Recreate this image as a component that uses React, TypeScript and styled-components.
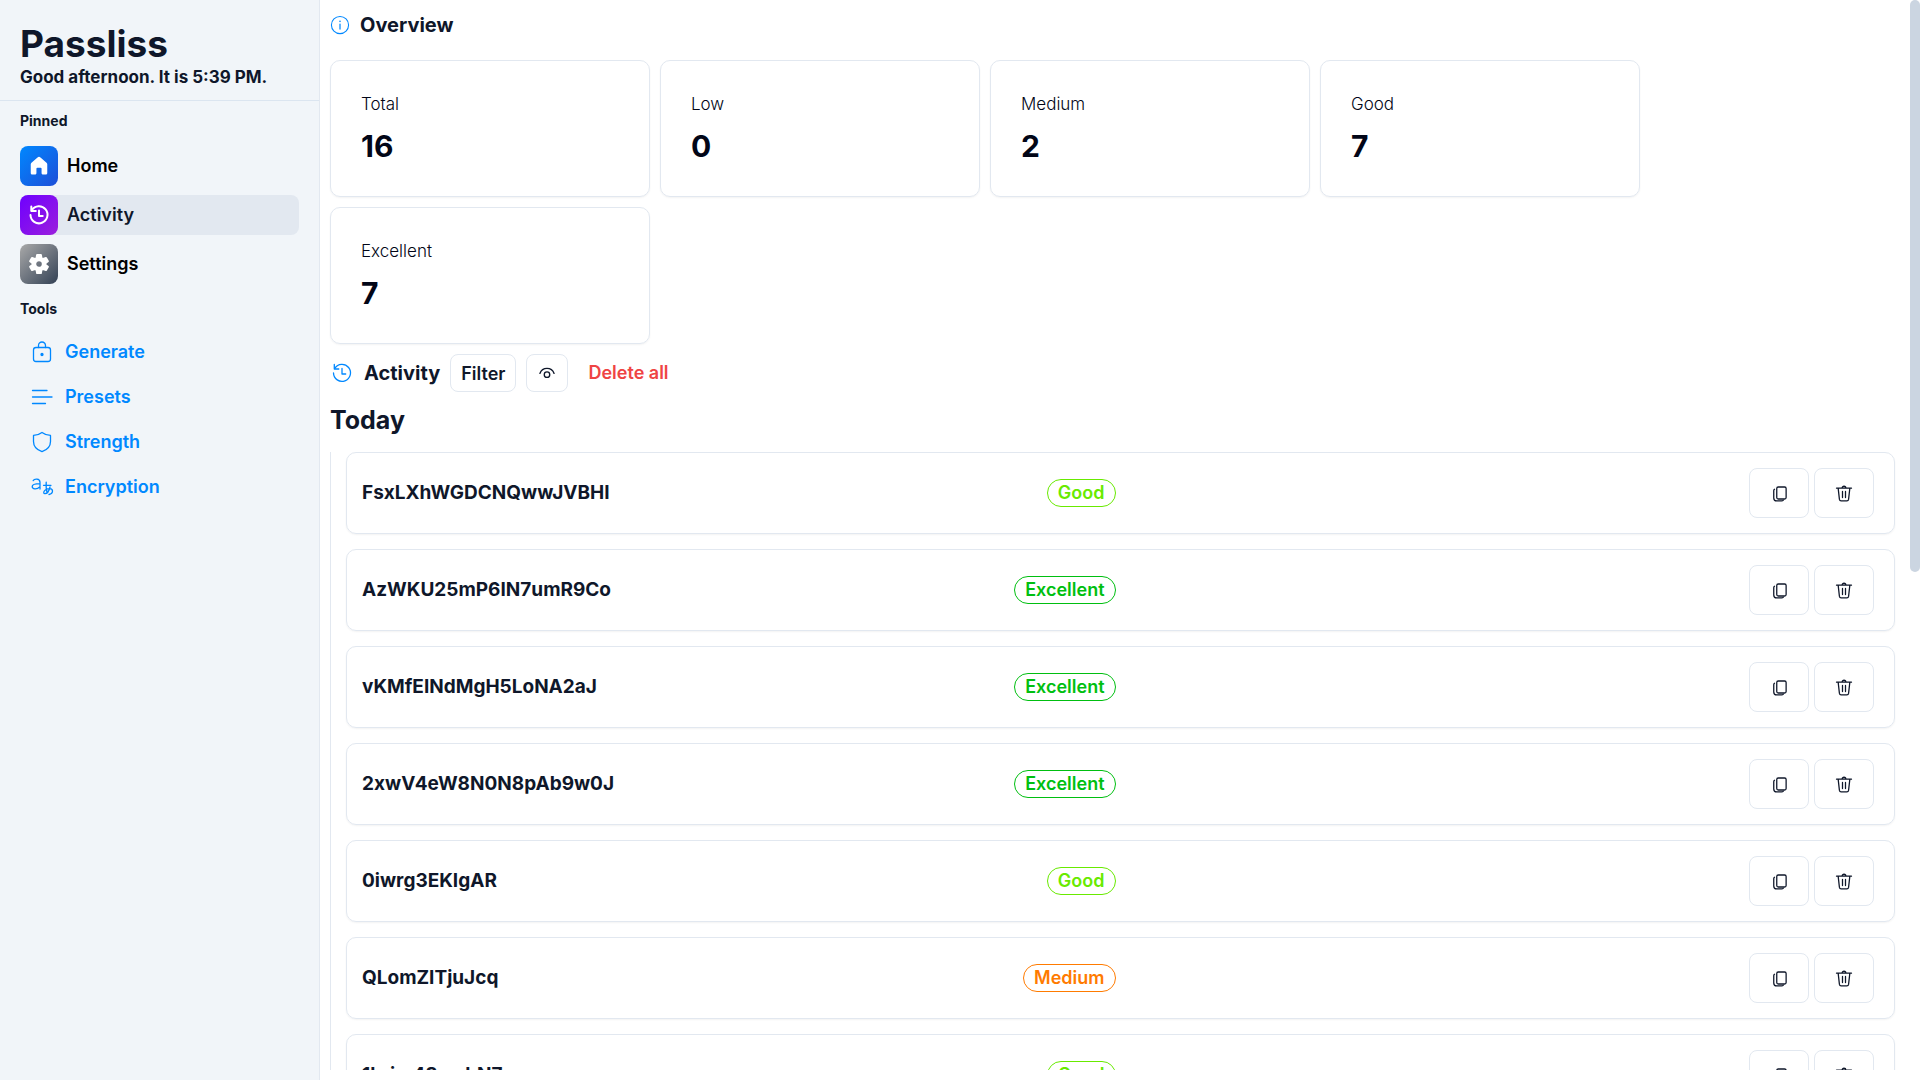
import React from "react";
import styled, { createGlobalStyle } from "styled-components";

const GlobalStyle = createGlobalStyle`
  *, *::before, *::after { box-sizing: border-box; }
  body { margin: 0; background: #fff; color: #0f172a; font-family: Inter, "Liberation Sans", sans-serif; font-size: 18px; line-height: 24px; }
  h1, h2, h3, p, ul, dl, dd { margin: 0; padding: 0; }
  ul { list-style: none; }
  button { font-family: inherit; color: inherit; background: #fff; cursor: pointer; padding: 0; }
  a { text-decoration: none; }
  svg { display: block; flex: none; }
`;

const Page = styled.div`
  display: flex;
  height: 100vh;
`;

const Sidebar = styled.aside`
  flex: 0 0 320px;
  background: #f1f5f9;
  border-right: 1px solid #e2e8f0;
`;

const Brand = styled.header`
  padding: 24px 20px 9px;
  border-bottom: 1px solid #dbe5f0;
`;

const BrandName = styled.h1`
  font-size: 37px;
  line-height: 40px;
  font-weight: 700;
`;

const Greeting = styled.p`
  font-size: 17px;
  line-height: 27px;
  font-weight: 700;
`;

const NavSection = styled.nav`
  padding: 0 20px;
`;

const NavTitle = styled.h2`
  font-size: 14px;
  line-height: 20px;
  font-weight: 700;
  padding-top: 10px;
`;

const PinnedList = styled.ul`
  display: grid;
  gap: 9px;
  margin: 15px 0 5px;
`;

const PinnedLink = styled.a<{ $active?: boolean }>`
  display: flex;
  align-items: center;
  gap: 9px;
  border-radius: 8px;
  font-weight: 600;
  color: ${(p) => (p.$active ? "#0f172a" : "#000")};
  background: ${(p) => (p.$active ? "#e2e8f0" : "transparent")};
`;

const Tile = styled.span<{ $from: string; $to: string }>`
  display: grid;
  place-items: center;
  width: 38px;
  height: 40px;
  border-radius: 8px;
  color: #fff;
  background: linear-gradient(to bottom right, ${(p) => p.$from}, ${(p) => p.$to});
`;

const ToolList = styled.ul`
  display: grid;
  gap: 5px;
  padding: 13px 10px;
`;

const ToolLink = styled.a`
  display: flex;
  align-items: center;
  gap: 11px;
  height: 40px;
  font-weight: 600;
  color: #0088ff;
`;

const Main = styled.main`
  flex: 1;
  min-width: 0;
  margin-bottom: 10px;
  overflow-y: auto;
  scrollbar-width: none;
`;

const ScrollRail = styled.div`
  flex: 0 0 10px;
`;

const ScrollThumb = styled.div`
  height: 53%;
  border-radius: 5px;
  background: #cbd5e1;
`;

const Content = styled.div`
  padding: 10px 15px 10px 10px;
`;

const Row = styled.div`
  display: flex;
  align-items: center;
  gap: 10px;
`;

const SectionTitle = styled.h2`
  font-size: 20px;
  line-height: 30px;
  font-weight: 700;
`;

const Accent = styled.span`
  color: #0088ff;
`;

const Stats = styled.dl`
  display: flex;
  flex-wrap: wrap;
  gap: 10px;
  margin: 20px 0 10px;
`;

const Stat = styled.div`
  width: 320px;
  padding: 29px 30px;
  border: 1px solid #e2e8f0;
  border-radius: 10px;
  box-shadow: 0 1px 2px rgba(0, 0, 0, 0.05);
  color: #020617;
`;

const StatLabel = styled.dt`
  font-size: 17px;
  line-height: 28px;
  font-weight: 300;
`;

const StatValue = styled.dd`
  font-size: 30px;
  line-height: 36px;
  font-weight: 700;
  padding: 10px 0 3px;
`;

const SmallButton = styled.button`
  display: grid;
  place-items: center;
  height: 38px;
  padding: 0 10px;
  border: 1px solid #e2e8f0;
  border-radius: 8px;
  font-size: 18px;
  font-weight: 600;
`;

const DangerButton = styled.button`
  border: 0;
  padding: 0 10px;
  font-size: 18px;
  line-height: 24px;
  font-weight: 600;
  color: #ef4444;
`;

const DayTitle = styled.h3`
  font-size: 25px;
  line-height: 36px;
  font-weight: 700;
  margin: 10px 0 14px;
`;

const Entries = styled.ul`
  display: grid;
  gap: 15px;
  padding-left: 15px;
  border-left: 1px solid #e2e8f0;
`;

const Entry = styled.li`
  display: grid;
  grid-template-columns: 1fr 1fr;
  align-items: center;
  padding: 15px;
  border: 1px solid #e2e8f0;
  border-radius: 10px;
  box-shadow: 0 1px 2px rgba(0, 0, 0, 0.05);
`;

const EntryInfo = styled.div`
  display: flex;
  align-items: center;
  justify-content: space-between;
  padding-right: 5px;
`;

const Password = styled.p`
  font-size: 19px;
  line-height: 28px;
  font-weight: 700;
`;

const Badge = styled.span<{ $color: string }>`
  padding: 0 10px;
  border: 1px solid ${(p) => p.$color};
  border-radius: 14px;
  font-size: 18px;
  line-height: 26px;
  font-weight: 600;
  color: ${(p) => p.$color};
`;

const Actions = styled.div`
  display: flex;
  justify-content: flex-end;
  gap: 5px;
  padding-right: 5px;
`;

const ActionButton = styled.button`
  display: grid;
  place-items: center;
  width: 60px;
  height: 50px;
  border: 1px solid #e2e8f0;
  border-radius: 8px;
`;

type IconProps = { size?: number; weight?: number };

const Icon = ({ size = 24, weight = 1.3, children }: IconProps & { children: React.ReactNode }) => (
  <svg width={size} height={size} viewBox="0 0 24 24" fill="none" stroke="currentColor" strokeWidth={weight} strokeLinecap="round" strokeLinejoin="round" aria-hidden="true">
    {children}
  </svg>
);

const HomeIcon = () => (
  <Icon size={22}>
    <path fill="currentColor" stroke="none" d="M10.4 2.6a2.4 2.4 0 0 1 3.2 0l6.6 5.8c.5.5.8 1.1.8 1.8v9.3c0 1-.8 1.8-1.8 1.8h-2.6c-1 0-1.8-.8-1.8-1.8v-4.7c0-.6-.4-1-1-1h-3.6c-.6 0-1 .4-1 1v4.7c0 1-.8 1.8-1.8 1.8H4.8c-1 0-1.8-.8-1.8-1.8v-9.3c0-.7.3-1.3.8-1.8z" />
  </Icon>
);

const HistoryIcon = ({ size, weight }: IconProps) => (
  <Icon size={size} weight={weight}>
    <path d="M4.8 7.3A8.500 8.500 0 1 1 3.500 12" />
    <path d="M4.300 3.500v4.500h4.500" />
    <path d="M12 7.500v5.500h3.700" />
  </Icon>
);

const GearIcon = () => (
  <Icon size={24}>
    <path fill="currentColor" stroke="currentColor" strokeWidth={2} fillRule="evenodd" d="M10.1 3h3.8l.5 3 1.8 1 2.8-1.1 1.9 3.3-2.3 1.8v2l2.3 1.8-1.9 3.3-2.8-1.1-1.8 1-.5 3h-3.8l-.5-3-1.8-1L5 18.1l-1.9-3.3L5.4 13v-2L3.1 9.2 5 5.9 7.8 7l1.8-1zM12 8.2a3.8 3.8 0 1 0 0 7.6 3.8 3.8 0 0 0 0-7.6z" />
  </Icon>
);

const LockIcon = () => (
  <Icon>
    <rect x="3.5" y="7.5" width="17" height="14" rx="2.5" />
    <path d="M8.500 7.500V5.500a3.500 3.500 0 0 1 7 0v2" />
    <circle cx="12" cy="14.5" r="1" fill="currentColor" />
  </Icon>
);

const LinesIcon = () => (
  <Icon>
    <path d="M2.5 5.5h14.500M2.500 12h19.500M2.500 18.500h13" />
  </Icon>
);

const ShieldIcon = () => (
  <Icon>
    <path d="M12 2.400c2.500 1.900 5.300 2.800 8.500 3v6.100c0 4.800-2.800 8.200-8.500 10.200-5.700-2-8.500-5.400-8.500-10.200V5.400c3.200-.2 6-1.100 8.500-3z" />
  </Icon>
);

const TranslateIcon = () => (
  <Icon>
    <path d="M3.200 5.600C4.200 3.800 10 3 10 7.500V14M10 8.600C5.500 8.600 2.200 9 2.200 11.600s4.500 3.600 7.800 0" />
    <path d="M13.500 10.300h7.500M16.200 7.200c-.3 4.800 0 7.800 1 10.500M20 12c-.7 3-2.700 6.700-5 6.700-1.600 0-1.900-2 .3-3.700 2.600-2 7.200-1.900 7.200 1.100 0 1.900-1.500 3.100-3.500 3.400" />
  </Icon>
);

const InfoIcon = () => (
  <Icon size={20}>
    <circle cx="12" cy="12" r="10.3" />
    <path d="M12 10.800v6" strokeWidth={1.5} />
    <circle cx="12" cy="7.6" r="1" fill="currentColor" stroke="none" />
  </Icon>
);

const EyeIcon = () => (
  <Icon size={20} weight={1.6}>
    <path d="M3.500 12.500C5 8.500 8 6.500 12 6.500s7 2 8.500 6" />
    <circle cx="12" cy="14" r="3.3" />
  </Icon>
);

const CopyIcon = () => (
  <Icon size={18} weight={1.7}>
    <rect x="9" y="4" width="12.5" height="16" rx="2" />
    <path d="M6 7c-.7.500-1 1.200-1 2v9.500c0 2.500 1.500 4 4 4h6.500c1 0 1.800-.4 2.300-1" />
  </Icon>
);

const TrashIcon = () => (
  <Icon size={18} weight={1.7}>
    <path d="M2 5.500h20M9.500 5.500a2.500 2.500 0 0 1 5 0M4.200 5.500l1.700 15c.2 1.200 1 2 2.200 2h7.800c1.200 0 2-.8 2.200-2l1.700-15M10 10v8M14 10v8" />
  </Icon>
);

const pinned = [
  { label: "Home", icon: <HomeIcon />, from: "#0088ff", to: "#1d4ed8" },
  { label: "Activity", icon: <HistoryIcon size={24} weight={2} />, from: "#6e00ff", to: "#9b1fdc", active: true },
  { label: "Settings", icon: <GearIcon />, from: "#a9a9a9", to: "#334155" },
];

const tools = [
  { label: "Generate", icon: <LockIcon /> },
  { label: "Presets", icon: <LinesIcon /> },
  { label: "Strength", icon: <ShieldIcon /> },
  { label: "Encryption", icon: <TranslateIcon /> },
];

const stats = [
  ["Total", 16],
  ["Low", 0],
  ["Medium", 2],
  ["Good", 7],
  ["Excellent", 7],
];

const strengthColors: Record<string, string> = {
  Good: "#68ea00",
  Excellent: "#00bf10",
  Medium: "#ff7b00",
};

const entries = [
  ["FsxLXhWGDCNQwwJVBHI", "Good"],
  ["AzWKU25mP6IN7umR9Co", "Excellent"],
  ["vKMfEINdMgH5LoNA2aJ", "Excellent"],
  ["2xwV4eW8N0N8pAb9w0J", "Excellent"],
  ["0iwrg3EKIgAR", "Good"],
  ["QLomZITjuJcq", "Medium"],
  ["1hrim48wohN7", "Good"],
];

export default function App() {
  return (
    <>
      <GlobalStyle />
      <Page>
        <Sidebar>
          <Brand>
            <BrandName>Passliss</BrandName>
            <Greeting>Good afternoon. It is 5:39 PM.</Greeting>
          </Brand>
          <NavSection aria-label="Pinned">
            <NavTitle>Pinned</NavTitle>
            <PinnedList>
              {pinned.map((item) => (
                <li key={item.label}>
                  <PinnedLink href="#" $active={item.active} aria-current={item.active ? "page" : undefined}>
                    <Tile $from={item.from} $to={item.to}>{item.icon}</Tile>
                    {item.label}
                  </PinnedLink>
                </li>
              ))}
            </PinnedList>
          </NavSection>
          <NavSection aria-label="Tools">
            <NavTitle>Tools</NavTitle>
            <ToolList>
              {tools.map((item) => (
                <li key={item.label}>
                  <ToolLink href="#">{item.icon}{item.label}</ToolLink>
                </li>
              ))}
            </ToolList>
          </NavSection>
        </Sidebar>
        <Main>
          <Content>
            <Row>
              <Accent><InfoIcon /></Accent>
              <SectionTitle>Overview</SectionTitle>
            </Row>
            <Stats>
              {stats.map(([label, value]) => (
                <Stat key={label}>
                  <StatLabel>{label}</StatLabel>
                  <StatValue>{value}</StatValue>
                </Stat>
              ))}
            </Stats>
            <Row>
              <Accent><HistoryIcon size={24} /></Accent>
              <SectionTitle>Activity</SectionTitle>
              <SmallButton type="button">Filter</SmallButton>
              <SmallButton type="button" aria-label="Show passwords"><EyeIcon /></SmallButton>
              <DangerButton type="button">Delete all</DangerButton>
            </Row>
            <DayTitle>Today</DayTitle>
            <Entries>
              {entries.map(([password, strength]) => (
                <Entry key={password}>
                  <EntryInfo>
                    <Password>{password}</Password>
                    <Badge $color={strengthColors[strength]}>{strength}</Badge>
                  </EntryInfo>
                  <Actions>
                    <ActionButton type="button" aria-label="Copy"><CopyIcon /></ActionButton>
                    <ActionButton type="button" aria-label="Delete"><TrashIcon /></ActionButton>
                  </Actions>
                </Entry>
              ))}
            </Entries>
          </Content>
        </Main>
        <ScrollRail aria-hidden="true">
          <ScrollThumb />
        </ScrollRail>
      </Page>
    </>
  );
}
